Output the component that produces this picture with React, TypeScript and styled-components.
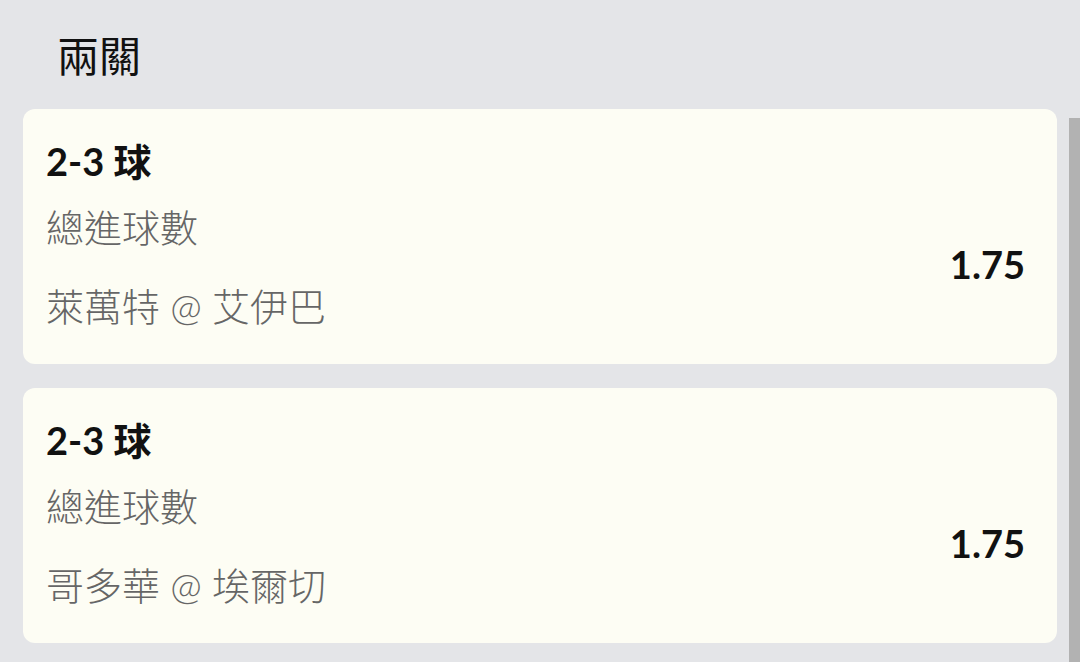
import * as React from "react";
import styled, { createGlobalStyle } from "styled-components";

const GlobalStyle = createGlobalStyle`
  html, body {
    margin: 0;
    padding: 0;
    height: 100%;
    background: #e4e5e8;
    overflow: hidden;
  }
  #root {
    height: 100%;
  }
`;

const Page = styled.div`
  display: flex;
  height: 100vh;
  font-family: Lato, "Noto Sans CJK TC", sans-serif;
  background: #e4e5e8;
`;

const Main = styled.div`
  flex: 1;
  display: flex;
  flex-direction: column;
  min-width: 0;
`;

const Heading = styled.h1`
  margin: 0;
  padding: 32px 0 0 57px;
  font-size: 42px;
  line-height: 48px;
  font-weight: 400;
  color: #111;
`;

const List = styled.div`
  display: flex;
  flex-direction: column;
  gap: 24px;
  padding: 29px 12px 0 23px;
`;

const Card = styled.div`
  display: flex;
  align-items: center;
  justify-content: space-between;
  background: #fdfdf4;
  border-radius: 12px;
  padding: 29px 32px 35px 23px;
`;

const Info = styled.div`
  display: flex;
  flex-direction: column;
`;

const Pick = styled.div`
  font-size: 38px;
  line-height: 46px;
  font-weight: 700;
  color: #111;
`;

const Line = styled.div<{ $gap: number }>`
  margin-top: ${(p) => p.$gap}px;
  font-size: 38px;
  line-height: 46px;
  font-weight: 300;
  color: #666;
`;

const Odds = styled.div`
  padding-top: 60px;
  font-size: 38px;
  line-height: 46px;
  font-weight: 700;
  color: #111;
`;

const Rail = styled.div`
  width: 11px;
  display: flex;
  flex-direction: column;
  padding-top: 118px;
`;

const Thumb = styled.div`
  flex: 1;
  background: #b2b2b2;
`;

interface Bet {
	pick: string;
	market: string;
	match: string;
	odds: string;
}

const bets: Bet[] = [
	{ pick: "2-3 球", market: "總進球數", match: "萊萬特 @ 艾伊巴", odds: "1.75" },
	{ pick: "2-3 球", market: "總進球數", match: "哥多華 @ 埃爾切", odds: "1.75" },
];

const BetCard = ({ bet }: { bet: Bet }) => (
	<Card>
		<Info>
			<Pick>{bet.pick}</Pick>
			<Line $gap={20}>{bet.market}</Line>
			<Line $gap={33}>{bet.match}</Line>
		</Info>
		<Odds>{bet.odds}</Odds>
	</Card>
);

const App = () => {
	return (
		<Page>
			<GlobalStyle />
			<Main>
				<Heading>兩關</Heading>
				<List>
					{bets.map((bet, i) => (
						<BetCard key={i} bet={bet} />
					))}
				</List>
			</Main>
			<Rail>
				<Thumb />
			</Rail>
		</Page>
	);
};

export default App;
